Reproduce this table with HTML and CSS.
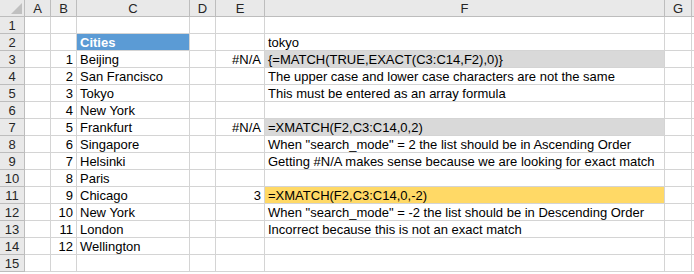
FILE: index.html
```html
<!DOCTYPE html>
<html>
<head>
<meta charset="utf-8">
<link rel="stylesheet" href="styles.css">
</head>
<body>
<div class="sheet">
  <div class="hd corner"><span class="tri"></span></div>
  <div class="hd col">A</div><div class="hd col">B</div><div class="hd col">C</div><div class="hd col">D</div><div class="hd col">E</div><div class="hd col">F</div><div class="hd col">G</div><div class="hd col rest"></div>

  <div class="hd row">1</div><div class="c"></div><div class="c"></div><div class="c"></div><div class="c"></div><div class="c"></div><div class="c"></div><div class="c"></div><div class="c rest"></div>

  <div class="hd row">2</div><div class="c"></div><div class="c"></div><div class="c blue">Cities</div><div class="c"></div><div class="c"></div><div class="c">tokyo</div><div class="c"></div><div class="c rest"></div>

  <div class="hd row">3</div><div class="c"></div><div class="c num">1</div><div class="c">Beijing</div><div class="c"></div><div class="c num">#N/A</div><div class="c gray">{=MATCH(TRUE,EXACT(C3:C14,F2),0)}</div><div class="c"></div><div class="c rest"></div>

  <div class="hd row">4</div><div class="c"></div><div class="c num">2</div><div class="c">San Francisco</div><div class="c"></div><div class="c"></div><div class="c">The upper case and lower case characters are not the same</div><div class="c"></div><div class="c rest"></div>

  <div class="hd row">5</div><div class="c"></div><div class="c num">3</div><div class="c">Tokyo</div><div class="c"></div><div class="c"></div><div class="c">This must be entered as an array formula</div><div class="c"></div><div class="c rest"></div>

  <div class="hd row">6</div><div class="c"></div><div class="c num">4</div><div class="c">New York</div><div class="c"></div><div class="c"></div><div class="c"></div><div class="c"></div><div class="c rest"></div>

  <div class="hd row">7</div><div class="c"></div><div class="c num">5</div><div class="c">Frankfurt</div><div class="c"></div><div class="c num">#N/A</div><div class="c gray">=XMATCH(F2,C3:C14,0,2)</div><div class="c"></div><div class="c rest"></div>

  <div class="hd row">8</div><div class="c"></div><div class="c num">6</div><div class="c">Singapore</div><div class="c"></div><div class="c"></div><div class="c">When "search_mode" = 2 the list should be in Ascending Order</div><div class="c"></div><div class="c rest"></div>

  <div class="hd row">9</div><div class="c"></div><div class="c num">7</div><div class="c">Helsinki</div><div class="c"></div><div class="c"></div><div class="c">Getting #N/A makes sense because we are looking for exact match</div><div class="c"></div><div class="c rest"></div>

  <div class="hd row">10</div><div class="c"></div><div class="c num">8</div><div class="c">Paris</div><div class="c"></div><div class="c"></div><div class="c"></div><div class="c"></div><div class="c rest"></div>

  <div class="hd row">11</div><div class="c"></div><div class="c num">9</div><div class="c">Chicago</div><div class="c"></div><div class="c num">3</div><div class="c yellow">=XMATCH(F2,C3:C14,0,-2)</div><div class="c"></div><div class="c rest"></div>

  <div class="hd row">12</div><div class="c"></div><div class="c num">10</div><div class="c">New York</div><div class="c"></div><div class="c"></div><div class="c">When "search_mode" = -2 the list should be in Descending Order</div><div class="c"></div><div class="c rest"></div>

  <div class="hd row">13</div><div class="c"></div><div class="c num">11</div><div class="c">London</div><div class="c"></div><div class="c"></div><div class="c">Incorrect because this is not an exact match</div><div class="c"></div><div class="c rest"></div>

  <div class="hd row">14</div><div class="c"></div><div class="c num">12</div><div class="c">Wellington</div><div class="c"></div><div class="c"></div><div class="c"></div><div class="c"></div><div class="c rest"></div>

  <div class="hd row">15</div><div class="c"></div><div class="c"></div><div class="c"></div><div class="c"></div><div class="c"></div><div class="c"></div><div class="c"></div><div class="c rest"></div>
</div>
</body>
</html>
```

FILE: styles.css
```css
html, body {
  margin: 0;
  padding: 0;
  background: #ffffff;
}
.sheet {
  display: grid;
  grid-template-columns: 25px 26px 26px 113px 26px 49px 400px 27px 2px;
  grid-template-rows: repeat(16, 17px);
  font-family: "Liberation Sans", Arial, sans-serif;
  font-size: 13px;
  color: #000;
  width: 694px;
}
.sheet > div {
  box-sizing: border-box;
  line-height: 16px;
  padding-top: 1px;
  white-space: nowrap;
  overflow: visible;
}
.hd {
  background: #e9e9e9;
  color: #262626;
  border-right: 1px solid #bdbdbd;
  border-bottom: 1px solid #bdbdbd;
  text-align: center;
}
.corner {
  position: relative;
}
.tri {
  position: absolute;
  right: 2px;
  bottom: 2px;
  width: 0;
  height: 0;
  border-left: 11px solid transparent;
  border-bottom: 11px solid #c0c0c0;
}
.c {
  border-right: 1px solid #d4d4d4;
  border-bottom: 1px solid #d4d4d4;
  padding-left: 3px;
  padding-right: 3px;
}
.num {
  text-align: right;
}
.rest {
  border-right: none;
  padding-left: 0;
  padding-right: 0;
}
.hd.rest {
  border-right: none;
}
.blue {
  background: #5b9bd5;
  color: #ffffff;
  font-weight: bold;
}
.gray {
  background: #d9d9d9;
}
.yellow {
  background: #ffd966;
}
```
